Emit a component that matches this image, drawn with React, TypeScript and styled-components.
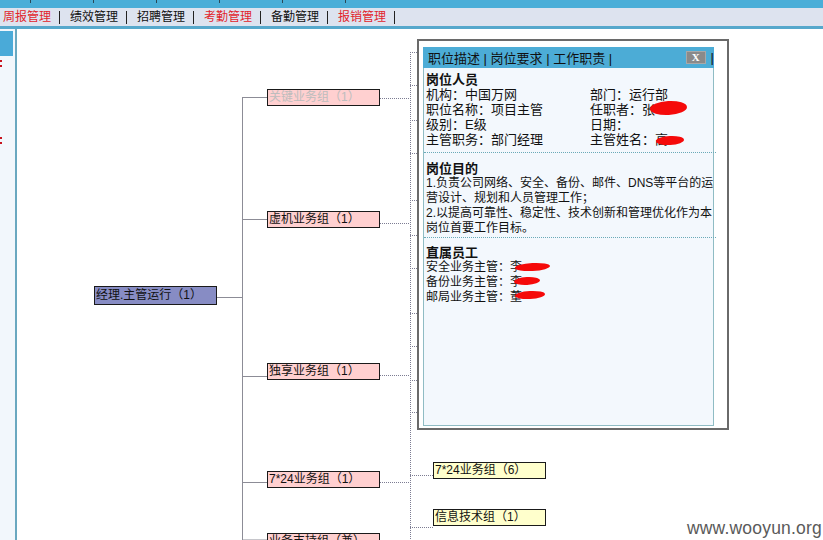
import React from 'react';
import styled, { createGlobalStyle } from 'styled-components';

const GlobalStyle = createGlobalStyle`
  html, body {
    margin: 0;
    padding: 0;
    background: #fff;
  }
  body {
    font-family: "Liberation Sans", "Noto Sans CJK SC", sans-serif;
    font-size: 12px;
    color: #111;
  }
`;

// canvas origin in page pixels (left pane + top bars)
const OX = 17;
const OY = 29;

const Page = styled.div`
  position: relative;
  width: 823px;
  height: 540px;
  display: flex;
  flex-direction: column;
  overflow: hidden;
`;

const TopStrip = styled.div`
  height: 8px;
  background: #4aaed8;
  display: flex;
  align-items: flex-start;
  gap: 62px;
  padding-left: 30px;
`;

const Tick = styled.span`
  width: 1px;
  height: 3px;
  background: #2b4857;
`;

const MenuBar = styled.nav`
  height: 18px;
  background: #dde3ef;
  border-bottom: 3px solid #56a8cc;
  display: flex;
  align-items: center;
  padding-left: 3px;
`;

const MenuItem = styled.span<{ $alert?: boolean }>`
  font-size: 12px;
  line-height: 17px;
  white-space: nowrap;
  color: ${(p) => (p.$alert ? '#e2232b' : '#111')};
`;

const MenuSep = styled.span`
  width: 1px;
  height: 13px;
  background: #222;
  margin: 0 10px 0 8px;
`;

const Body = styled.div`
  flex: 1;
  display: flex;
  min-height: 0;
`;

const SidePane = styled.aside`
  width: 15px;
  background: #f2f7fc;
  border-right: 2px solid #6aa8c0;
  display: flex;
  flex-direction: column;
`;

const SideTab = styled.div`
  margin-top: 2px;
  width: 13px;
  height: 25px;
  background: #4aaad8;
`;

const RedColon = styled.div<{ $gap: number }>`
  margin-top: ${(p) => p.$gap}px;
  width: 2px;
  height: 7px;
  background: linear-gradient(#c8141e 0 2px, transparent 2px 5px, #c8141e 5px 7px);
`;

const Canvas = styled.main`
  position: relative;
  flex: 1;
  background: #fff;
`;

const Wires = styled.svg`
  position: absolute;
  left: 0;
  top: 0;
`;

type Kind = 'root' | 'group' | 'team';

const nodeBg: Record<Kind, string> = {
  root: '#878cc4',
  group: '#ffd0d0',
  team: '#ffffcc',
};

const Node = styled.div<{ $x: number; $y: number; $w: number; $h: number; $kind: Kind; $dim?: boolean }>`
  position: absolute;
  left: ${(p) => p.$x - OX}px;
  top: ${(p) => p.$y - OY}px;
  width: ${(p) => p.$w}px;
  height: ${(p) => p.$h}px;
  box-sizing: border-box;
  border: 1px solid #1a1a1a;
  background: ${(p) => nodeBg[p.$kind]};
  color: ${(p) => (p.$dim ? '#bdbdbd' : '#111')};
  font-size: 12px;
  line-height: ${(p) => p.$h - 2}px;
  padding-left: 1px;
  white-space: nowrap;
  overflow: hidden;
`;

const Popup = styled.section`
  position: absolute;
  left: ${417 - OX}px;
  top: ${39 - OY}px;
  width: 312px;
  height: 391px;
  box-sizing: border-box;
  border: 2px solid #6a6a6a;
  background: #fff;
  padding: 6px 13px 2px 4px;
  display: flex;
  flex-direction: column;
`;

const PopHeader = styled.div`
  height: 21px;
  background: #4cacd6;
  display: flex;
  align-items: center;
  padding-left: 5px;
  font-size: 13px;
  color: #111;
  white-space: nowrap;
`;

const CloseBtn = styled.span`
  margin-left: auto;
  margin-right: 5px;
  width: 20px;
  height: 13px;
  box-sizing: border-box;
  background: #8a8a8a;
  border: 1px solid #a8a8a8;
  color: #fff;
  font: bold 11px/11px "Liberation Serif", serif;
  display: flex;
  align-items: center;
  justify-content: center;
`;

const PopBody = styled.div`
  flex: 1;
  background: #f3f8fd;
  border: 1px solid #8fbcc4;
  border-top: none;
  line-height: 15px;
`;

const Section = styled.div<{ $top: number; $bottom: number; $size: number; $rule?: boolean }>`
  padding: ${(p) => p.$top}px 0 ${(p) => p.$bottom}px 2px;
  margin-right: -3px;
  font-size: ${(p) => p.$size}px;
  border-bottom: ${(p) => (p.$rule ? '1px dotted #6aaab8' : 'none')};
`;

const Heading = styled.div`
  font-size: 13px;
  font-weight: bold;
`;

const InfoGrid = styled.div`
  display: grid;
  grid-template-columns: 164px 1fr;
  white-space: nowrap;
`;

const Line = styled.div`
  white-space: nowrap;
`;

const Masked = styled.span`
  position: relative;
`;

// red marker scribbled over a name
const Redact = styled.span<{ $x: number; $y: number; $w: number; $h: number }>`
  position: absolute;
  left: ${(p) => p.$x}px;
  top: ${(p) => p.$y}px;
  width: ${(p) => p.$w}px;
  height: ${(p) => p.$h}px;
  background: #f50a0a;
  border-radius: 50%;
  transform: rotate(-3deg);
`;

const Watermark = styled.div`
  position: absolute;
  right: 1px;
  bottom: 1px;
  font: 17.5px "Liberation Sans", Arial, sans-serif;
  color: #5a5a5a;
  letter-spacing: 0.2px;
`;

const menu = [
  { label: '周报管理', alert: true },
  { label: '绩效管理' },
  { label: '招聘管理' },
  { label: '考勤管理', alert: true },
  { label: '备勤管理' },
  { label: '报销管理', alert: true },
];

const nodes: { text: string; x: number; y: number; w: number; h: number; kind: Kind; dim?: boolean }[] = [
  { text: '经理.主管运行（1）', x: 94, y: 286, w: 123, h: 19, kind: 'root' },
  { text: '关键业务组（1）', x: 267, y: 89, w: 113, h: 17, kind: 'group', dim: true },
  { text: '虚机业务组（1）', x: 267, y: 211, w: 113, h: 17, kind: 'group' },
  { text: '独享业务组（1）', x: 267, y: 363, w: 113, h: 17, kind: 'group' },
  { text: '7*24业务组（1）', x: 267, y: 471, w: 113, h: 17, kind: 'group' },
  { text: '业务支持组（兼）', x: 267, y: 533, w: 113, h: 17, kind: 'group' },
  { text: '7*24业务组（6）', x: 433, y: 462, w: 113, h: 17, kind: 'team' },
  { text: '信息技术组（1）', x: 433, y: 509, w: 113, h: 17, kind: 'team' },
];

type Seg = [number, number, number, number];

// connector lines, page coordinates
const solid: Seg[] = [
  [217, 297.5, 242, 297.5],
  [242.5, 97, 242.5, 540],
  [242, 97.5, 267, 97.5],
  [242, 219.5, 267, 219.5],
  [242, 376.5, 267, 376.5],
  [242, 482.5, 267, 482.5],
  [242, 540, 267, 540],
];

const dotted: Seg[] = [
  [380, 98.5, 410, 98.5],
  [380, 223.5, 410, 223.5],
  [380, 375.5, 410, 375.5],
  [380, 482.5, 410, 482.5],
  [410.5, 52, 410.5, 540],
  [410, 475.5, 433, 475.5],
  [410, 527.5, 433, 527.5],
  ...[52, 85, 120, 153, 200, 235, 268, 313, 346, 380, 412].map((y) => [410, y + 0.5, 418, y + 0.5] as Seg),
];

export default function App() {
  return (
    <Page>
      <GlobalStyle />
      <TopStrip>
        {[0, 1, 2, 3, 4, 5].map((i) => (
          <Tick key={i} />
        ))}
      </TopStrip>
      <MenuBar>
        {menu.map((m) => (
          <React.Fragment key={m.label}>
            <MenuItem $alert={m.alert}>{m.label}</MenuItem>
            <MenuSep />
          </React.Fragment>
        ))}
      </MenuBar>
      <Body>
        <SidePane>
          <SideTab />
          <RedColon $gap={4} />
          <RedColon $gap={70} />
        </SidePane>
        <Canvas>
          <Wires width={823 - OX} height={540 - OY} viewBox={`${OX} ${OY} ${823 - OX} ${540 - OY}`}>
            {solid.map(([x1, y1, x2, y2], i) => (
              <line key={'s' + i} x1={x1} y1={y1} x2={x2} y2={y2} stroke="#8c8c96" strokeWidth={1} />
            ))}
            {dotted.map(([x1, y1, x2, y2], i) => (
              <line
                key={'d' + i}
                x1={x1}
                y1={y1}
                x2={x2}
                y2={y2}
                stroke="#7c7c92"
                strokeWidth={1}
                strokeDasharray="1 1"
              />
            ))}
          </Wires>
          {nodes.map((n) => (
            <Node key={n.text} $x={n.x} $y={n.y} $w={n.w} $h={n.h} $kind={n.kind} $dim={n.dim}>
              {n.text}
            </Node>
          ))}
          <Popup>
            <PopHeader>
              职位描述 | 岗位要求 | 工作职责 |<CloseBtn>X</CloseBtn>|
            </PopHeader>
            <PopBody>
              <Section $top={4} $bottom={5} $size={13} $rule>
                <Heading>岗位人员</Heading>
                <InfoGrid>
                  <span>机构：中国万网</span>
                  <span>部门：运行部</span>
                  <span>职位名称：项目主管</span>
                  <span>
                    任职者：
                    <Masked>
                      张<Redact $x={8} $y={-1} $w={37} $h={14} />
                    </Masked>
                  </span>
                  <span>级别：E级</span>
                  <span>日期：</span>
                  <span>主管职务：部门经理</span>
                  <span>
                    主管姓名：
                    <Masked>
                      高<Redact $x={1} $y={4} $w={28} $h={9} />
                    </Masked>
                  </span>
                </InfoGrid>
              </Section>
              <Section $top={8} $bottom={1} $size={12} $rule>
                <Heading>岗位目的</Heading>
                <Line>1.负责公司网络、安全、备份、邮件、DNS等平台的运</Line>
                <Line>营设计、规划和人员管理工作；</Line>
                <Line>2.以提高可靠性、稳定性、技术创新和管理优化作为本</Line>
                <Line>岗位首要工作目标。</Line>
              </Section>
              <Section $top={7} $bottom={0} $size={12}>
                <Heading>直属员工</Heading>
                <Line>
                  安全业务主管：
                  <Masked>
                    李<Redact $x={5} $y={3} $w={35} $h={8} />
                  </Masked>
                </Line>
                <Line>
                  备份业务主管：
                  <Masked>
                    李<Redact $x={4} $y={2} $w={26} $h={8} />
                  </Masked>
                </Line>
                <Line>
                  邮局业务主管：
                  <Masked>
                    董<Redact $x={5} $y={1} $w={30} $h={8} />
                  </Masked>
                </Line>
              </Section>
            </PopBody>
          </Popup>
        </Canvas>
      </Body>
      <Watermark>www.wooyun.org</Watermark>
    </Page>
  );
}
